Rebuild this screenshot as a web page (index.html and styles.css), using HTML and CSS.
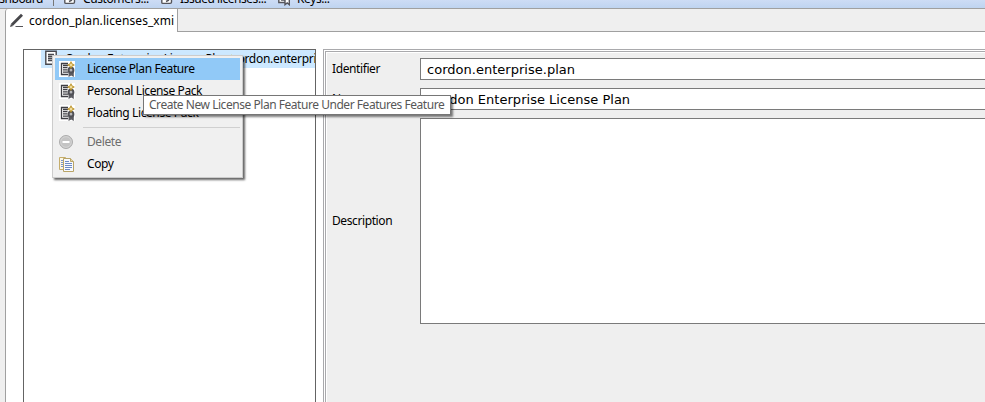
FILE: index.html
```html
<!DOCTYPE html>
<html lang="en">
<head>
<meta charset="utf-8">
<title>License plan editor</title>
<link rel="stylesheet" href="styles.css">
</head>
<body>
<svg width="0" height="0" class="defs">
  <symbol id="license" viewBox="0 0 16 16">
    <path fill="#fff" d="M0 0h16v16H0z"/>
    <path fill="none" stroke="#3e3e44" stroke-width="1.3" d="M9 13.5H2.5v-11H9M4 4.5h5M4 6.7h4.5M4 8.9h4.5M4 11.1h5"/>
    <path fill="#5c5c62" d="M9.5 10h5.3v6L12.2 14.4 9.5 16z"/>
    <circle cx="12" cy="9.2" r="2.4" fill="#b5b5b8" stroke="#505056" stroke-width="2"/>
    <path fill="#bd942b" d="M12 0l1.4 2.6L16 4l-2.6 1.4L12 8l-1.4-2.6L8 4l2.6-1.4z"/>
    <path stroke="#fff3c4" d="M12 2.5v3M10.5 4h3"/>
  </symbol>
  <symbol id="doc" viewBox="0 0 12 16">
    <path fill="#fff" stroke="#48484e" stroke-width="1.4" d="M.8 1.2h10.4v13H.8z"/>
    <path stroke="#48484e" stroke-width="1.3" d="M3 4.5h6M3 6.5h6M3 8.5h5M3 10.5h4"/>
  </symbol>
</svg>
<div class="window">
  <header class="toolbar">
    <span class="tool t1">Dashboard</span><i class="sep"></i>
    <svg class="tool-icon" viewBox="0 0 12 12"><path d="M.8 0v8.4q0 1 1 1h7.4q1.3 0 1.3-1.4V0M5 7.5l3-1.5"/></svg><span class="tool t2">Customers...</span>
    <svg class="tool-icon" viewBox="0 0 12 12"><path d="M.8 0v8.4q0 1 1 1h7.4q1.3 0 1.3-1.4V0M5 7.5l3-1.5"/></svg><span class="tool t3">Issued licenses...</span>
    <svg class="tool-icon" viewBox="0 0 12 12"><path d="M.8 0v8.5h6M3 6h4M7 5h4.3v5.7L9.2 9 7 10.7z"/></svg><span class="tool t4">Keys...</span>
  </header>
  <div class="editor">
    <div class="tabs">
      <div class="tab">
        <svg width="16" height="16" viewBox="0 0 16 16"><path d="M3 11.8 13 1.8" stroke="#47474b" stroke-width="2.8"/><path d="M1 14l1-3.2 2.2 2.2z" fill="#47474b"/><path d="M6.5 13.5H14" stroke="#55555a"/></svg>
        <span>cordon_plan.licenses_xmi</span>
      </div>
      <div class="tab-rest"></div>
    </div>
    <main class="content">
      <section class="tree">
        <div class="row"><svg width="12" height="16"><use href="#doc"/></svg><span class="row-name">Cordon Enterprise License Plan [</span><span class="row-id">cordon.enterprise.plan]</span></div>
      </section>
      <section class="details"><div class="form">
        <label>Identifier</label><div class="field">cordon.enterprise.plan</div>
        <label>Name</label><div class="field">Cordon Enterprise License Plan</div>
        <label>Description</label><div class="field area"></div>
      </div></section>
    </main>
  </div>
</div>
<nav class="menu">
  <div class="item active"><svg><use href="#license"/></svg><span>License Plan Feature</span></div>
  <div class="item"><svg><use href="#license"/></svg><span>Personal License Pack</span></div>
  <div class="item"><svg><use href="#license"/></svg><span>Floating License Pack</span></div>
  <hr>
  <div class="item disabled"><svg viewBox="0 0 16 16"><circle cx="7" cy="8" r="6.5" fill="#c4c4c4" stroke="#adadad"/><circle cx="7" cy="8" r="5.3" fill="none" stroke="#d4d4d4"/><path d="M3.5 8h7" stroke="#fff" stroke-width="2"/></svg><span>Delete</span></div>
  <div class="item"><svg viewBox="0 0 16 16"><path d="M.5 1.5h6v12h-6z" fill="#fbf6e4" stroke="#c5ad6b"/><path d="M2 4.5h2M2 6.5h2M2 8.5h2M2 10.5h2" stroke="#7895c9"/><path d="M4.5 2.5h7l3 3v10h-10z" fill="#f7faff" stroke="#b9a467"/><path d="M11.5 2.5v3h3" fill="#e8d7a0" stroke="#b9a467"/><path d="M6 5.5h4M6 7.5h7M6 9.5h7M6 11.5h7M6 13.5h5" stroke="#6d8cc5"/></svg><span>Copy</span></div>
</nav>
<div class="tooltip"><span>Create New License Plan Feature Under Features Feature</span></div>
</body>
</html>
```
FILE: styles.css
```css
* { box-sizing: border-box; }
body { margin: 0; width: 985px; height: 402px; overflow: hidden; background: #efefef; color: #000; font: 12px/16px "Noto Sans", "Open Sans", sans-serif; letter-spacing: -0.4px; }
.defs { position: absolute; }
.window { height: 402px; display: flex; flex-direction: column; }
.toolbar { height: 9px; flex: none; background: linear-gradient(#cddcf5, #bfd4f0); border-bottom: 1px solid #a0a0a0; overflow: hidden; display: flex; }
.tool { margin-top: -9px; height: 17px; white-space: nowrap; flex: none; }
.t1 { width: 53px; display: flex; justify-content: flex-end; padding-right: 10px; }
.sep { width: 1px; height: 6px; background: #777; margin-right: 10px; }
.tool-icon { width: 12px; height: 12px; margin-top: -6px; margin-right: 7px; flex: none; fill: #fff; stroke: #55555b; stroke-width: 1.4; }
.t2 { width: 78px; }
.t3 { width: 98px; letter-spacing: -.45px; }
.editor { flex: 1; margin-left: 5px; border-left: 1px solid #a0a0a0; border-top-left-radius: 3px; background: #fff; display: flex; flex-direction: column; }
.tabs { height: 23px; display: flex; }
.tab { width: 171px; display: flex; padding: 4px 0 0 3px; letter-spacing: .08px; }
.tab svg { flex: none; margin-right: 4px; }
.tab span { white-space: nowrap; }
.tab-rest { flex: 1; background: #efefef; border-left: 1px solid #a0a0a0; border-bottom: 1px solid #a0a0a0; }
.content { flex: 1; display: flex; padding: 17px 0 0 17px; }
.tree { width: 293px; border: 1px solid #646464; border-bottom: 0; overflow: hidden; }
.row { height: 18px; margin-left: 17px; padding-left: 4px; background: #cce8ff; display: flex; white-space: nowrap; line-height: 18px; }
.row svg { flex: none; margin-right: 8px; }
.row-name { width: 167px; flex: none; overflow: hidden; }
.row-id { letter-spacing: -.3px; }
.details { flex: 1; margin-left: 7px; border: solid #a9a9ac; border-width: 1px 0 0 1px; padding: 1px 0 0 1px; }
.form { height: 100%; border: solid #a9a9ac; border-width: 1px 0 0 1px; box-shadow: inset 1px 1px #fff; background: #efefef; padding: 6px 0 0 6px; display: grid; grid-template-columns: 88px 1fr; grid-template-rows: 22px 22px 206px; row-gap: 8px; align-items: center; align-content: start; }
.field { height: 22px; border: 1px solid #7a7a7a; border-right: 0; background: #fff; padding: 0 6px; font: 13px/21px "DejaVu Sans", sans-serif; letter-spacing: .02px; }
.area { height: 206px; }
.menu { position: absolute; left: 52px; top: 55px; width: 191px; height: 123px; border: 1px solid #ccc; background: #f0f0f0; padding: 2px; box-shadow: 2px 2px 2px rgba(0,0,0,.6); }
.item { height: 22px; display: flex; align-items: center; padding-left: 4px; white-space: nowrap; }
.item svg { width: 16px; height: 16px; margin-right: 12px; flex: none; }
.active { background: #91c9f7; }
.disabled { color: #6d6d6d; }
.menu hr { margin: 3px 0 3px 28px; border: 0; border-top: 1px solid #d0d0d0; }
.tooltip { position: absolute; left: 143px; top: 95px; width: 308px; height: 20px; padding: 1px 5px; border: 1px solid #767676; background: #fff; color: #575757; white-space: nowrap; letter-spacing: -.46px; box-shadow: 2px 2px 2px rgba(0,0,0,.5); }
```
